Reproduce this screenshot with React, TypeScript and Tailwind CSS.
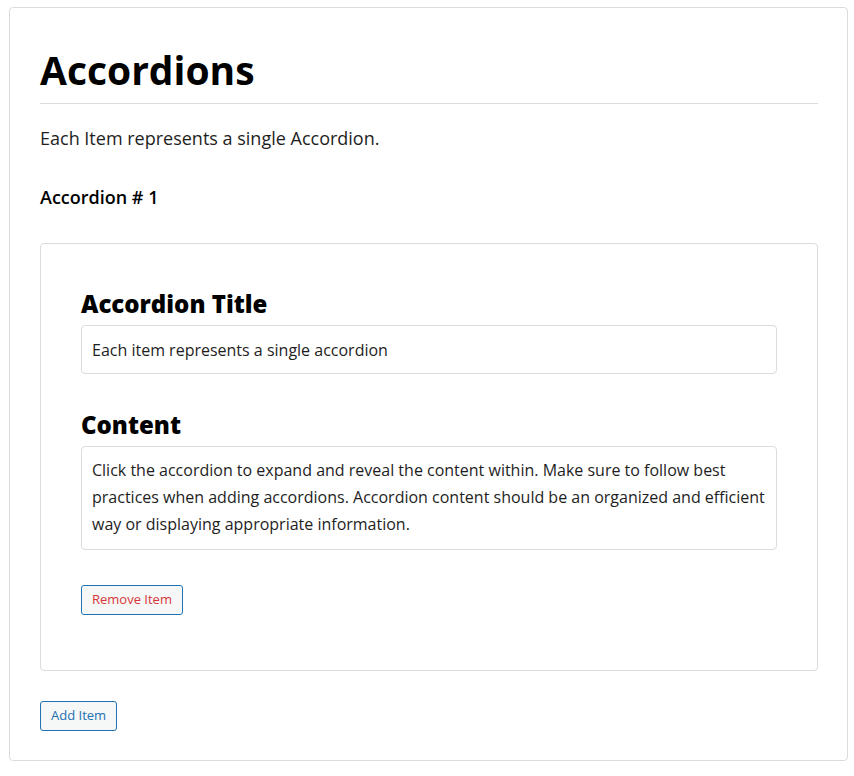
export default function App() {
  return (
    <div className="min-h-[776px] bg-white pl-[9px] pt-[7px] font-['Open_Sans',sans-serif] text-[#1e1e1e]">
      <div className="w-[839px] rounded-[4px] border border-[#dcdcde] pl-[30px] pr-[29px] pt-[38px] pb-[29px]">
        {/* Page heading */}
        <h1 className="border-b border-[#dcdcde] pb-[9px] text-[39px] font-bold leading-[48px] text-black">
          Accordions
        </h1>
        <p className="mt-[21px] text-[18px] leading-[27px]">Each Item represents a single Accordion.</p>
        <h3 className="mt-[32px] text-[18px] font-semibold leading-[27px] text-black">Accordion # 1</h3>

        {/* Single accordion item */}
        <div className="mt-[32px] rounded-[4px] border border-[#dcdcde] px-10 pt-[45px] pb-[55px]">
          <h2 className="text-[24px] font-extrabold leading-[30px] text-black">Accordion Title</h2>
          <div className="mt-[6px] flex h-[49px] items-center rounded-[4px] border border-[#dcdcde] px-[10px] text-[16px]">
            Each item represents a single accordion
          </div>

          <h2 className="mt-[36px] text-[24px] font-extrabold leading-[30px] text-black">Content</h2>
          <div className="mt-[6px] rounded-[4px] border border-[#dcdcde] px-[10px] pt-[10px] pb-[11px] text-[16px] leading-[27px]">
            Click the accordion to expand and reveal the content within. Make sure to follow best practices when
            adding accordions. Accordion content should be an organized and efficient way or displaying
            appropriate information.
          </div>

          <button className="mt-[35px] h-[30px] rounded-[3px] border border-[#2271b1] bg-[#f6f7f7] px-[10px] text-[13px] text-[#d63638]">
            Remove Item
          </button>
        </div>

        <button className="mt-[30px] h-[30px] rounded-[3px] border border-[#2271b1] bg-[#f6f7f7] px-[10px] text-[13px] text-[#2271b1]">
          Add Item
        </button>
      </div>
    </div>
  );
}
